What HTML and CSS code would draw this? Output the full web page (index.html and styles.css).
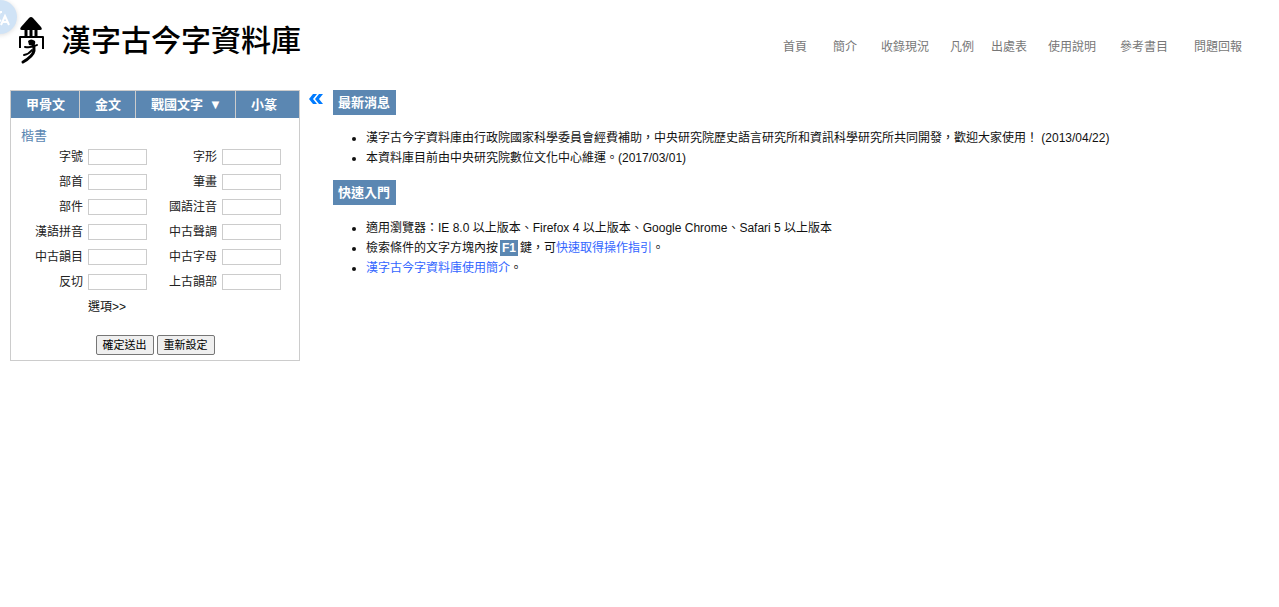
FILE: index.html
```html
<!DOCTYPE html>
<html lang="zh-Hant">
<head>
<meta charset="utf-8">
<title>漢字古今字資料庫</title>
<link rel="stylesheet" href="styles.css">
</head>
<body>
<button class="translate" type="button" aria-label="翻譯">
  <svg width="34" height="34" viewBox="0 0 34 34" fill="none" stroke="#fff" stroke-width="2">
    <path d="M10 12H19M14 9V12M17 12Q15 18 10 21M12 15Q14 19 18 21"/>
    <path d="M18 25L22 16L26 25M19 22H25"/>
  </svg>
</button>
<header class="header">
  <div class="brand">
    <svg class="mark" width="28" height="50" viewBox="0 0 28 50" fill="none" stroke="#000">
      <path fill="#000" stroke="none" d="M11 2Q13 0 15 2L23 11Q25 14 22 14H4Q1 14 3 11Z"/>
      <path stroke-width="3" d="M8 13V21M13 13V21M18 13V21"/>
      <path stroke-width="2" stroke-linejoin="round" d="M2 32V21H25V33"/>
      <path fill="#000" stroke="none" d="M10 25Q13 22 17 25Q18 28 15 30L11 29Z"/>
      <path stroke-width="2" stroke-linecap="round" d="M7 31Q14 32 19 29M6 39Q11 38 14 34"/>
      <path stroke-width="3" stroke-linecap="round" d="M15 28Q18 35 13 40Q9 44 5 46"/>
    </svg>
    <h1 class="title">漢字古今字資料庫</h1>
  </div>
  <nav class="nav">
    <a href="#">首頁</a><a href="#">簡介</a><a href="#">收錄現況</a><a href="#">凡例</a><a href="#">出處表</a><a href="#">使用說明</a><a href="#">參考書目</a><a href="#">問題回報</a>
  </nav>
</header>
<div class="layout">
  <aside class="panel">
    <div class="tabs">
      <button type="button">甲骨文</button>
      <button type="button">金文</button>
      <button type="button">戰國文字<span class="arrow">▼</span></button>
      <button type="button">小篆</button>
    </div>
    <form class="search">
      <h2 class="script-name">楷書</h2>
      <div class="fields">
        <label for="f1">字號</label><input id="f1" type="text">
        <label for="f2">字形</label><input id="f2" type="text">
        <label for="f3">部首</label><input id="f3" type="text">
        <label for="f4">筆畫</label><input id="f4" type="text">
        <label for="f5">部件</label><input id="f5" type="text">
        <label for="f6">國語注音</label><input id="f6" type="text">
        <label for="f7">漢語拼音</label><input id="f7" type="text">
        <label for="f8">中古聲調</label><input id="f8" type="text">
        <label for="f9">中古韻目</label><input id="f9" type="text">
        <label for="f10">中古字母</label><input id="f10" type="text">
        <label for="f11">反切</label><input id="f11" type="text">
        <label for="f12">上古韻部</label><input id="f12" type="text">
        <a class="options" href="#">選項&gt;&gt;</a>
      </div>
      <div class="actions">
        <button type="submit">確定送出</button>
        <button type="reset">重新設定</button>
      </div>
    </form>
  </aside>
  <button class="collapse" type="button" aria-label="收合">
    <svg width="14" height="10" viewBox="0 0 14 10" fill="#007bff"><path d="M4 0H8L4 5L8 10H4L0 5ZM10 0H14L10 5L14 10H10L6 5Z"/></svg>
  </button>
  <main class="main">
    <h2 class="heading">最新消息</h2>
    <ul class="list">
      <li>漢字古今字資料庫由行政院國家科學委員會經費補助，中央研究院歷史語言研究所和資訊科學研究所共同開發，歡迎大家使用！ (2013/04/22)</li>
      <li>本資料庫目前由中央研究院數位文化中心維運。(2017/03/01)</li>
    </ul>
    <h2 class="heading">快速入門</h2>
    <ul class="list">
      <li>適用瀏覽器：IE 8.0 以上版本、Firefox 4 以上版本、Google Chrome、Safari 5 以上版本</li>
      <li>檢索條件的文字方塊內按<kbd>F1</kbd>鍵，可<a href="#">快速取得操作指引</a>。</li>
      <li><a href="#">漢字古今字資料庫使用簡介</a>。</li>
    </ul>
  </main>
</div>
</body>
</html>
```
FILE: styles.css
```css
* {
  box-sizing: border-box;
}

body {
  margin: 0;
  background: #fff;
  color: #111;
  font: 12px/20px "Liberation Sans", "Noto Sans CJK TC", sans-serif;
}

button,
input {
  font-family: inherit;
}

a {
  color: #36f;
  text-decoration: none;
}

.translate {
  position: absolute;
  top: 0;
  left: -17px;
  width: 34px;
  height: 34px;
  padding: 0;
  border: 0;
  border-radius: 50%;
  background: #d0e3f6;
  box-shadow: 0 1px 5px #ddd;
}

.translate svg {
  display: block;
}

.header {
  display: flex;
  justify-content: space-between;
  height: 90px;
  padding: 16px 37px 0 18px;
}

.brand {
  display: flex;
  gap: 15px;
}

.mark {
  flex: none;
}

.title {
  margin: 0;
  color: #000;
  font-size: 30px;
  font-weight: 500;
  line-height: 50px;
  white-space: nowrap;
}

.nav {
  display: grid;
  grid-template-columns: 50px 48px 69px 41px 57px 72px 74px 48px;
  padding-top: 21px;
  white-space: nowrap;
}

.nav a {
  color: #777;
}

.layout {
  display: flex;
  align-items: flex-start;
  padding: 0 10px;
}

.panel {
  flex: none;
  width: 290px;
  border: 1px solid #ccc;
}

.tabs {
  display: grid;
  grid-template-columns: 69px 56px 100px 1fr;
  height: 27px;
  background: #5b87b2;
}

.tabs button {
  padding: 0 0 0 15px;
  border: 0;
  border-right: 1px solid #ccc;
  background: none;
  color: #fff;
  font-size: 13px;
  font-weight: 700;
  line-height: 27px;
  text-align: left;
  white-space: nowrap;
}

.tabs button:last-child {
  border-right: 0;
}

.arrow {
  margin-left: 6px;
}

.search {
  padding: 9px 0 5px;
}

.script-name {
  margin: 0 0 0 10px;
  color: #5b87b2;
  font-size: 13px;
  font-weight: 400;
  line-height: 17px;
}

.fields {
  display: grid;
  grid-template-columns: 72px 59px 65px 59px;
  grid-auto-rows: 25px;
  column-gap: 5px;
  align-items: center;
  color: #222;
  text-align: right;
}

.fields input {
  width: 100%;
  height: 16px;
  padding: 0 2px;
  border: 1px solid #ccc;
  background: #fff;
  font-size: 12px;
}

.fields .options {
  grid-column: 2;
  color: #111;
  text-align: left;
}

.actions {
  display: flex;
  justify-content: center;
  gap: 3px;
  margin-top: 16px;
}

.actions button {
  height: 20px;
  padding: 0 6px;
  border: 1px solid #767676;
  border-radius: 2px;
  background: #efefef;
  color: #000;
  font-size: 11px;
  line-height: 18px;
}

.collapse {
  flex: none;
  width: 33px;
  padding: 4px 0 0 9px;
  border: 0;
  background: none;
}

.collapse svg {
  display: block;
}

.main {
  flex: 1;
}

.heading {
  width: fit-content;
  margin: 0;
  padding: 0 6px 0 5px;
  background: #5b87b2;
  color: #fff;
  font-size: 13px;
  font-weight: 700;
  line-height: 25px;
}

.list {
  margin: 13px 0 12px;
  padding-left: 33px;
}

kbd {
  margin: 0 2px;
  padding: 1px 2px;
  background: #5b87b2;
  color: #fff;
  font: inherit;
  font-weight: 700;
}
```
